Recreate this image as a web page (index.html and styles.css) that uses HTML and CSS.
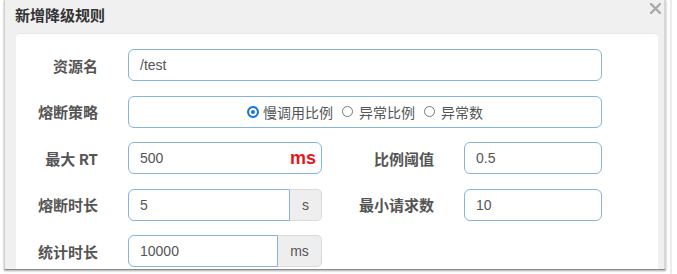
FILE: index.html
```html
<!DOCTYPE html>
<html lang="zh">
<head>
<meta charset="utf-8">
<link rel="stylesheet" href="styles.css">
</head>
<body>
<div class="page">
  <div class="modal">
    <div class="modal-header">
      <span class="title">新增降级规则</span>
      <svg class="close" width="11" height="11" viewBox="0 0 11 11"><path d="M1 1 L10 10 M10 1 L1 10" stroke="#a9a9a9" stroke-width="2.4" stroke-linecap="round"/></svg>
    </div>
    <div class="modal-body">
      <div class="row">
        <label class="lbl">资源名</label>
        <div class="field full">/test</div>
      </div>
      <div class="row">
        <label class="lbl">熔断策略</label>
        <div class="field full radios">
          <span class="opt"><span class="radio checked"></span>慢调用比例</span>
          <span class="opt"><span class="radio"></span>异常比例</span>
          <span class="opt"><span class="radio"></span>异常数</span>
        </div>
      </div>
      <div class="row">
        <label class="lbl">最大 RT</label>
        <div class="field half split"><span>500</span><span class="ms">ms</span></div>
        <label class="lbl lbl2">比例阈值</label>
        <div class="field small">0.5</div>
      </div>
      <div class="row">
        <label class="lbl">熔断时长</label>
        <div class="group half">
          <div class="field grow">5</div>
          <div class="addon s">s</div>
        </div>
        <label class="lbl lbl2">最小请求数</label>
        <div class="field small">10</div>
      </div>
      <div class="row">
        <label class="lbl">统计时长</label>
        <div class="group half">
          <div class="field grow">10000</div>
          <div class="addon">ms</div>
        </div>
      </div>
    </div>
  </div>
</div>
</body>
</html>
```
FILE: styles.css
```css
html, body {
  margin: 0;
  padding: 0;
  background: #fff;
  width: 677px;
  height: 274px;
  overflow: hidden;
}
.page {
  width: 672px;
  height: 274px;
  border-right: 2px solid #ececec;
  box-sizing: border-box;
}
.modal {
  margin-left: 4px;
  width: 662px;
  height: 270px;
  background: #f0f0f0;
  border-left: 1px solid #cfcfcf;
  border-right: 2px solid #d6d6d6;
  border-bottom: 1px solid #8a8a8a;
  box-shadow: 0 1px 2px rgba(0,0,0,0.35);
  box-sizing: border-box;
  display: flex;
  flex-direction: column;
  position: relative;
}
.modal-header {
  height: 33px;
  padding-left: 10px;
  display: flex;
  align-items: center;
  box-sizing: border-box;
  padding-bottom: 4px;
}
.title {
  font-family: "Noto Sans CJK SC", "Liberation Sans", sans-serif;
  font-weight: bold;
  font-size: 15px;
  color: #333;
}
.close {
  position: absolute;
  top: 3px;
  right: 3px;
}
.modal-body {
  flex: 1;
  margin-left: 11px;
  width: 642px;
  background: #fff;
  border-radius: 4px 4px 0 0;
  border-top: 1px solid #e6e6e6;
  box-sizing: border-box;
  padding-top: 15px;
  display: flex;
  flex-direction: column;
  gap: 14.5px;
}
.row {
  display: flex;
  align-items: center;
  height: 32px;
}
.lbl {
  width: 82px;
  text-align: right;
  font-family: "Noto Sans CJK SC", "Liberation Sans", sans-serif;
  font-weight: bold;
  font-size: 15px;
  color: #555;
  margin-right: 30px;
  flex: none;
}
.lbl2 {
  width: 112px;
}
.field {
  height: 32px;
  box-sizing: border-box;
  border: 1px solid #86b3df;
  border-radius: 6px;
  padding-left: 11px;
  display: flex;
  align-items: center;
  font-family: "Liberation Sans", Arial, sans-serif;
  font-size: 14px;
  color: #555;
  flex: none;
}
.full { width: 474px; }
.half { width: 194px; }
.small { width: 138px; }
.split {
  justify-content: space-between;
  padding-right: 5px;
}
.ms {
  color: #e8161b;
  font-weight: bold;
  font-size: 18px;
  font-family: "Liberation Sans", Arial, sans-serif;
}
.radios {
  justify-content: center;
  padding-left: 0;
  gap: 9px;
  font-family: "Noto Sans CJK SC", sans-serif;
  font-size: 14px;
  color: #555;
}
.opt {
  display: flex;
  align-items: center;
}
.radio {
  width: 9px;
  height: 9px;
  border: 1px solid #777;
  border-radius: 50%;
  margin-right: 6px;
  box-sizing: content-box;
}
.radio.checked {
  width: 8px;
  height: 8px;
  border: 2px solid #1a73e8;
  background: #1a73e8;
  box-shadow: inset 0 0 0 2px #fff;
  margin-right: 4px;
}
.group {
  display: flex;
  height: 32px;
  flex: none;
}
.grow {
  flex: 1;
  border-radius: 6px 0 0 6px;
}
.addon {
  width: 32px;
  height: 32px;
  box-sizing: border-box;
  background: #eee;
  border: 1px solid #d9d9d9;
  border-left: none;
  border-radius: 0 5px 5px 0;
  display: flex;
  align-items: center;
  justify-content: center;
  font-family: "Liberation Sans", Arial, sans-serif;
  font-size: 14px;
  color: #555;
}
.group .addon:not(.s) {
  width: 44px;
}
```
